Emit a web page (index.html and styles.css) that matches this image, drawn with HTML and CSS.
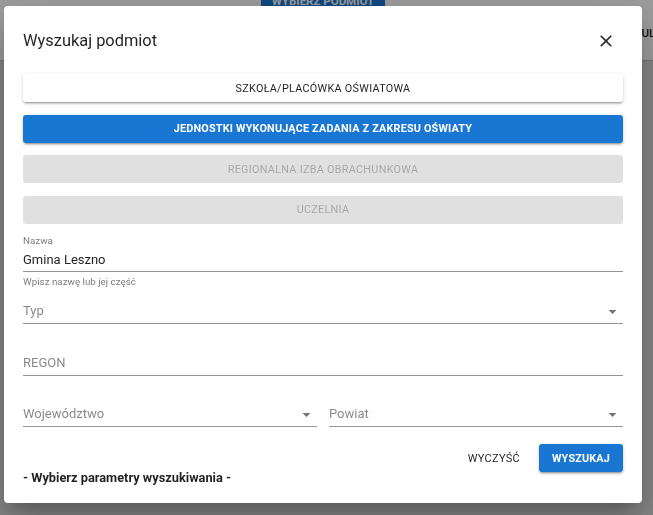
FILE: index.html
```html
<!DOCTYPE html>
<html lang="pl">
<head>
  <meta charset="UTF-8">
  <meta name="viewport" content="width=device-width, initial-scale=1.0">
  <title>Wyszukaj podmiot</title>
  <link rel="stylesheet" href="styles.css">
</head>
<body>
  <div class="app-bar">
    <button class="app-btn">Wybierz podmiot</button>
    <span class="app-tab">Formularze</span>
  </div>
  <div class="app-body"></div>

  <div class="backdrop"></div>

  <div class="dialog">
    <div class="dialog-title">
      <h2>Wyszukaj podmiot</h2>
      <button class="close" aria-label="Zamknij">
        <svg viewBox="0 0 24 24"><path d="M19 6.41L17.59 5 12 10.59 6.41 5 5 6.41 10.59 12 5 17.59 6.41 19 12 13.41 17.59 19 19 17.59 13.41 12z"/></svg>
      </button>
    </div>

    <div class="dialog-content">
      <!-- rodzaj podmiotu -->
      <div class="type-list">
        <button class="btn btn-raised">Szkoła/placówka oświatowa</button>
        <button class="btn btn-primary">Jednostki wykonujące zadania z zakresu oświaty</button>
        <button class="btn" disabled>Regionalna Izba Obrachunkowa</button>
        <button class="btn" disabled>Uczelnia</button>
      </div>

      <div class="field field-name">
        <label class="field-label" for="nazwa">Nazwa</label>
        <input class="input" id="nazwa" type="text" value="Gmina Leszno">
        <p class="helper">Wpisz nazwę lub jej część</p>
      </div>

      <div class="field field-first">
        <div class="input select">
          <span>Typ</span>
          <svg viewBox="0 0 24 24"><path d="M7 10l5 5 5-5z"/></svg>
        </div>
      </div>

      <div class="field">
        <input class="input" type="text" placeholder="REGON">
      </div>

      <div class="field field-row">
        <div class="input select">
          <span>Województwo</span>
          <svg viewBox="0 0 24 24"><path d="M7 10l5 5 5-5z"/></svg>
        </div>
        <div class="input select">
          <span>Powiat</span>
          <svg viewBox="0 0 24 24"><path d="M7 10l5 5 5-5z"/></svg>
        </div>
      </div>

      <div class="actions">
        <button class="btn-text">Wyczyść</button>
        <button class="btn btn-primary btn-search">Wyszukaj</button>
      </div>

      <p class="message">- Wybierz parametry wyszukiwania -</p>
    </div>
  </div>
</body>
</html>
```

FILE: styles.css
```css
* {
  margin: 0;
  padding: 0;
  box-sizing: border-box;
}

body {
  font-family: Roboto, "Liberation Sans", sans-serif;
  background: #dadada;
  color: rgba(0, 0, 0, 0.87);
  overflow: hidden;
  height: 515px;
}

button {
  font-family: inherit;
}

/* strona pod oknem */
.app-bar {
  display: flex;
  align-items: flex-start;
  height: 61px;
  padding-left: 261px;
  background: #fff;
  border-bottom: 1px solid #bdbdbd;
  overflow: hidden;
}

.app-btn {
  flex: none;
  width: 124px;
  height: 28px;
  margin-top: -13px;
  border: none;
  border-radius: 3px;
  background: #1976d2;
  color: #fff;
  font-size: 11.5px;
  font-weight: 700;
  white-space: nowrap;
  text-transform: uppercase;
}

.app-tab {
  flex: none;
  margin-left: 225px;
  margin-top: 25px;
  line-height: 16px;
  font-size: 11.5px;
  font-weight: 500;
  color: #212121;
  text-transform: uppercase;
  white-space: nowrap;
}

.backdrop {
  position: fixed;
  inset: 0;
  background: rgba(0, 0, 0, 0.38);
}

/* okno dialogowe */
.dialog {
  position: fixed;
  left: 4px;
  top: 6px;
  width: 638px;
  padding: 19px 19px 19px;
  background: #fff;
  border-radius: 4px;
  box-shadow: 0 11px 15px -7px rgba(0, 0, 0, 0.2),
              0 24px 38px 3px rgba(0, 0, 0, 0.14),
              0 9px 46px 8px rgba(0, 0, 0, 0.12);
}

.dialog-title {
  display: flex;
  align-items: center;
  justify-content: space-between;
  height: 32px;
}

.dialog-title h2 {
  font-size: 16.4px;
  font-weight: 400;
  line-height: 32px;
}

.close {
  display: flex;
  width: 20px;
  height: 20px;
  margin-right: 7px;
  border: none;
  background: transparent;
  cursor: pointer;
}

.close svg {
  width: 20px;
  height: 20px;
  fill: #2b2b2b;
}

.type-list {
  display: flex;
  flex-direction: column;
  gap: 12.5px;
  margin-top: 17px;
}

.btn {
  height: 28px;
  border: none;
  border-radius: 3px;
  background: rgba(0, 0, 0, 0.12);
  color: rgba(0, 0, 0, 0.26);
  font-size: 10.8px;
  font-weight: 400;
  letter-spacing: 0.3px;
  text-transform: uppercase;
  cursor: pointer;
}

.btn:disabled {
  cursor: default;
}

.btn-raised {
  background: #fff;
  color: rgba(0, 0, 0, 0.87);
  box-shadow: 0 3px 1px -2px rgba(0, 0, 0, 0.2),
              0 2px 2px 0 rgba(0, 0, 0, 0.14),
              0 1px 5px 0 rgba(0, 0, 0, 0.12);
}

.btn-primary {
  background: #1976d2;
  color: #fff;
  font-weight: 700;
  letter-spacing: 0.2px;
  box-shadow: 0 3px 1px -2px rgba(0, 0, 0, 0.2),
              0 2px 2px 0 rgba(0, 0, 0, 0.14),
              0 1px 5px 0 rgba(0, 0, 0, 0.12);
}

/* pola formularza */
.field {
  margin-top: 26.5px;
}

.field-name {
  margin-top: 12.5px;
}

.field-first {
  margin-top: 11px;
}

.field-label {
  display: block;
  font-size: 9.8px;
  line-height: 10px;
  color: rgba(0, 0, 0, 0.54);
}

.input {
  display: block;
  width: 100%;
  height: 25px;
  border: none;
  border-bottom: 1px solid rgba(0, 0, 0, 0.42);
  outline: none;
  background: transparent;
  font-family: inherit;
  font-size: 13px;
  line-height: 24px;
  color: rgba(0, 0, 0, 0.87);
}

.field-name .input {
  margin-top: 1px;
}

.input::placeholder,
.select span {
  color: rgba(0, 0, 0, 0.48);
}

.select {
  display: flex;
  align-items: center;
  justify-content: space-between;
}

.select svg {
  width: 19px;
  height: 19px;
  margin-right: 1px;
  fill: rgba(0, 0, 0, 0.54);
}

.helper {
  margin-top: 4px;
  font-size: 9.8px;
  line-height: 12px;
  color: rgba(0, 0, 0, 0.54);
}

.field-row {
  display: grid;
  grid-template-columns: 1fr 1fr;
  gap: 12px;
}

.actions {
  display: flex;
  justify-content: flex-end;
  align-items: center;
  gap: 12px;
  margin-top: 17px;
}

.btn-text {
  height: 28px;
  padding: 0 7px;
  border: none;
  background: transparent;
  color: rgba(0, 0, 0, 0.87);
  font-size: 11px;
  font-weight: 400;
  letter-spacing: 0.3px;
  text-transform: uppercase;
  cursor: pointer;
}

.btn-search {
  width: 84px;
}

.message {
  font-size: 12.8px;
  font-weight: 700;
  line-height: 12px;
}
```
